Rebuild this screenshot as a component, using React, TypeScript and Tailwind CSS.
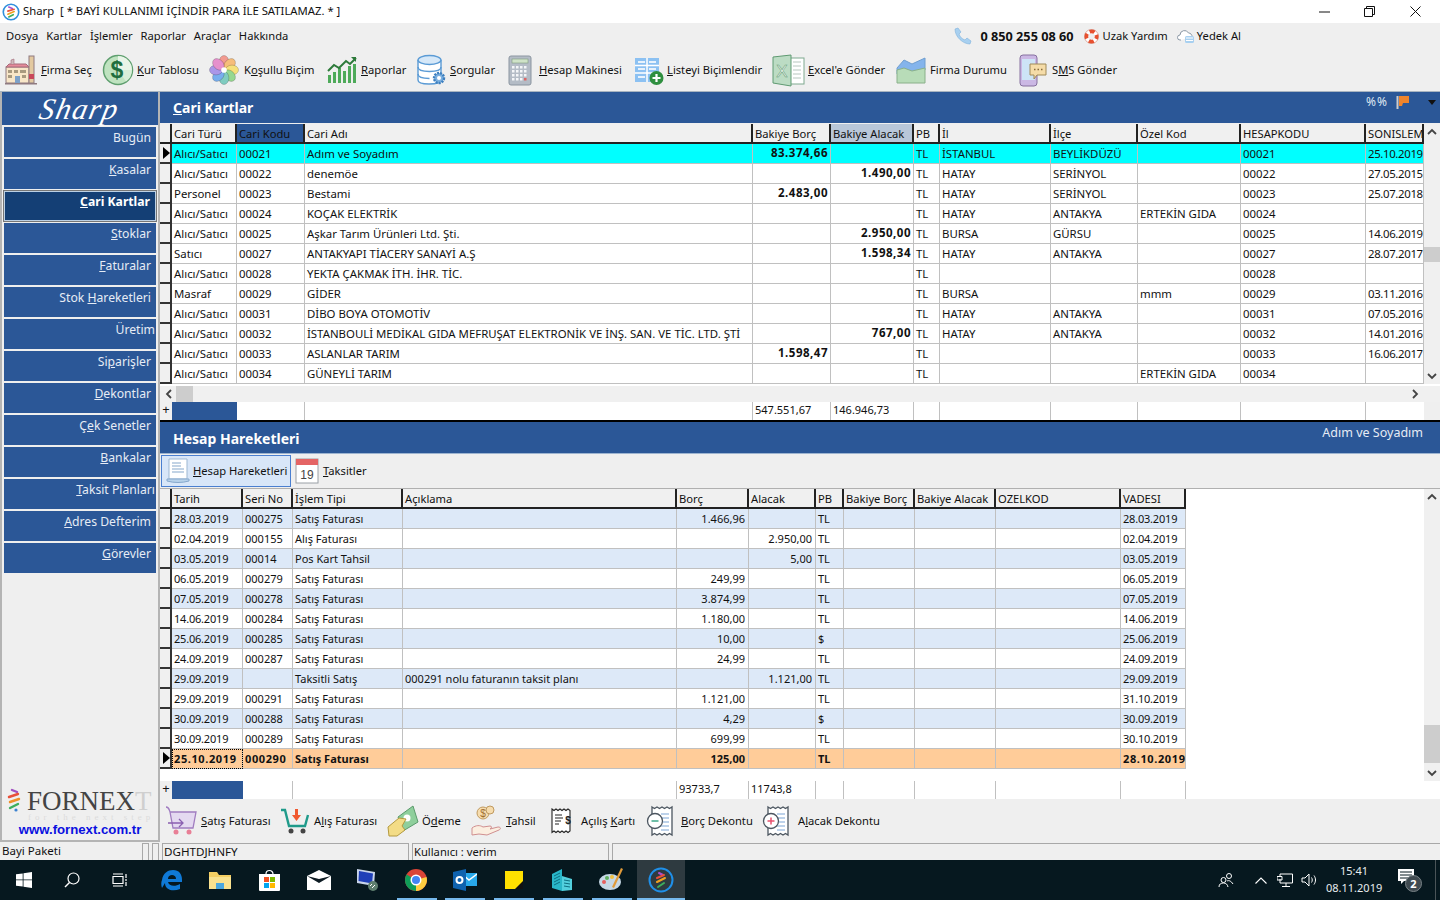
import React from "react";

const U = ({ t }: { t: string }) => {
  const i = t.indexOf("&");
  if (i < 0) return <>{t}</>;
  return (
    <>
      {t.slice(0, i)}
      <u>{t[i + 1]}</u>
      {t.slice(i + 2)}
    </>
  );
};

const Logo = ({ s = 18 }: { s?: number }) => (
  <svg width={s} height={s} viewBox="0 0 20 20">
    <circle cx="10" cy="10" r="8.600" fill="#fff" stroke="#2f8fdc" strokeWidth="1.800" />
    <path d="M7.500 4.500l4 1.500" stroke="#a84fd0" strokeWidth="1.800" strokeLinecap="round" />
    <path d="M6.500 9l7-2" stroke="#e8503a" strokeWidth="1.800" strokeLinecap="round" />
    <path d="M6.500 12.500l7-3" stroke="#f0a020" strokeWidth="1.800" strokeLinecap="round" />
    <path d="M7.500 15.500l5-2.500" stroke="#3dae5c" strokeWidth="1.800" strokeLinecap="round" />
  </svg>
);
const LogoDark = () => (
  <svg width="26" height="26" viewBox="0 0 26 26">
    <circle cx="13" cy="13" r="11.500" fill="none" stroke="#1f8fe8" strokeWidth="2" />
    <path d="M11 6l4 2" stroke="#a84fd0" strokeWidth="2" strokeLinecap="round" />
    <path d="M9 11l7-3" stroke="#e8503a" strokeWidth="2" strokeLinecap="round" />
    <path d="M9 15l8-4" stroke="#f0a020" strokeWidth="2" strokeLinecap="round" />
    <path d="M10 20l6-4" stroke="#3dae5c" strokeWidth="2" strokeLinecap="round" />
  </svg>
);

const Factory = () => (
  <svg width="32" height="30" viewBox="0 0 32 30">
    <rect x="1" y="12" width="23" height="16" fill="#f8e6c8" stroke="#8f7a80" />
    <path d="M1 12l3-3h17l3 3z" fill="#e58a9a" stroke="#a56a78" />
    <path d="M6 9V5l3-1v5" fill="#cbb" stroke="#a56a78" strokeWidth=".6" />
    <rect x="24" y="1" width="5" height="27" fill="#e3c9a0" stroke="#8f7a80" />
    <rect x="24" y="19" width="5" height="5" fill="#c9485a" />
    <rect x="3" y="15" width="4" height="3" fill="#a89a80" />
    <rect x="9" y="15" width="4" height="3" fill="#a89a80" />
    <rect x="15" y="15" width="6" height="3" fill="#a89a80" />
    <rect x="3" y="20" width="4" height="3" fill="#a89a80" />
    <rect x="10" y="21" width="5" height="7" fill="#7ca0c8" />
    <rect x="17" y="20" width="4" height="3" fill="#a89a80" />
    <rect x="0" y="28" width="32" height="1.500" fill="#8f7a80" />
  </svg>
);
const Dollar = () => (
  <svg width="32" height="32" viewBox="0 0 32 32">
    <circle cx="16" cy="16" r="14.500" fill="#bfe3c0" stroke="#5f9f6f" strokeWidth="1.500" />
    <path d="M16 16V2a14 14 0 0 1 14 14z" fill="#e9f5e8" />
    <path d="M16 16h14a14 14 0 0 1-6 11.500z" fill="#d8eed8" />
    <text x="15" y="24" fontSize="23" fontWeight="700" textAnchor="middle" fill="#1f6e3f" fontFamily="Liberation Sans">$</text>
  </svg>
);
const Flower = () => {
  const c = ["#f29a90", "#f6bd7a", "#f5e07a", "#96d890", "#80ccc0", "#78aeee", "#aa96e8", "#e690cc"];
  return (
    <svg width="32" height="32" viewBox="0 0 32 32">
      {c.map((f, i) => (
        <ellipse key={i} cx="16" cy="7.500" rx="5.200" ry="7" fill={f} stroke="#00000030" transform={`rotate(${i * 45} 16 16)`} />
      ))}
      <circle cx="16" cy="16" r="3" fill="#fff" />
    </svg>
  );
};
const Chart = () => (
  <svg width="30" height="28" viewBox="0 0 30 28">
    {[1, 6, 11, 16, 21, 26].map((x, i) => (
      <rect key={x} x={x} y={[19, 16, 12, 15, 10, 8][i]} width="3" height={[8, 11, 15, 12, 17, 19][i]} fill="#4eaa5a" />
    ))}
    <path d="M1 15l6-6 5 3 7-7 4 3 6-6" fill="none" stroke="#2d7a3a" strokeWidth="2" />
    <path d="M24 1h5v5z" fill="#2d7a3a" />
  </svg>
);
const Db = () => (
  <svg width="30" height="32" viewBox="0 0 30 32">
    <path d="M1 6v20c0 3 5 4 11 4s12-1 12-4V6" fill="#fff" stroke="#5b9bd5" strokeWidth="1.400" />
    <ellipse cx="12.500" cy="6" rx="11.500" ry="4.500" fill="#d6e8f8" stroke="#5b9bd5" strokeWidth="1.400" />
    <path d="M1 13c0 3 5 4.500 11.500 4.500S24 16 24 13M1 20c0 3 5 4.500 11.500 4.500" fill="none" stroke="#5b9bd5" strokeWidth="1.400" />
    <circle cx="22" cy="24" r="5" fill="#7cb0e0" stroke="#3d7fbf" strokeWidth="2.400" strokeDasharray="2 1" />
    <circle cx="22" cy="24" r="2" fill="#fff" />
  </svg>
);
const Calc = () => (
  <svg width="24" height="31" viewBox="0 0 24 31">
    <rect x="1" y="1" width="22" height="29" rx="2" fill="#b4bcc6" stroke="#8b95a0" />
    <rect x="4" y="4" width="16" height="4" fill="#cfe3c8" stroke="#7f9a7f" strokeWidth=".6" />
    {[11, 15, 19, 23].map((y) =>
      [4, 8, 12, 16].map((x) => <rect key={x + "" + y} x={x} y={y} width="2.500" height="2.500" fill={x === 16 && y === 23 ? "#d66" : "#f4f6f8"} />)
    )}
  </svg>
);
const ListAdd = () => (
  <svg width="30" height="30" viewBox="0 0 30 30">
    <rect x="0" y="3" width="24" height="24" fill="#8cc1f2" />
    <path d="M0 10.500h24M0 18h24M12 3v24" stroke="#fff" strokeWidth="1.500" />
    <path d="M3 6h7v2H3zM14 6h7v2h-7zM3 13h7v2H3zM14 13h7v2h-7zM3 21h7v2H3z" fill="#e8f2fc" />
    <circle cx="21.500" cy="23" r="7" fill="#2f8f3f" />
    <path d="M21.500 19v8M17.500 23h8" stroke="#fff" strokeWidth="2.200" />
  </svg>
);
const Excel = () => (
  <svg width="33" height="33" viewBox="0 0 33 33">
    <rect x="18" y="4" width="14" height="26" fill="#fff" stroke="#7fa98f" />
    <path d="M21 8h8M21 12h8M21 16h8M21 20h8M21 24h8" stroke="#b8c8c0" strokeWidth="1.200" />
    <path d="M1 3l18-2v31L1 29z" fill="#bcdcc4" stroke="#5f9a72" />
    <text x="10" y="23" fontSize="17" textAnchor="middle" fill="#fff" stroke="#5f9a72" strokeWidth=".5" fontFamily="Liberation Sans">X</text>
  </svg>
);
const Area = () => (
  <svg width="30" height="30" viewBox="0 0 30 30">
    <path d="M1 13l7-8 8 4 13-6v12l-13 3-8-2-7 3z" fill="#84b4ec" stroke="#6f9ed0" />
    <path d="M1 15l7-2 8 3 13-3v15H1z" fill="#b8dcb8" stroke="#8ab08a" />
  </svg>
);
const Sms = () => (
  <svg width="28" height="33" viewBox="0 0 28 33">
    <rect x="1" y="1" width="17" height="31" rx="3" fill="#cbb8e4" stroke="#86709f" />
    <rect x="3" y="5" width="13" height="21" fill="#cde4f6" />
    <path d="M11 10h16v11h-9l-3 4v-4h-4z" fill="#f5dca8" stroke="#a08a58" />
    <path d="M15 15.500h1.500M18.500 15.500H20M22 15.500h1.500" stroke="#86693a" strokeWidth="1.500" />
  </svg>
);

const Phone = () => (
  <svg width="18" height="18" viewBox="0 0 18 18">
    <path d="M1 2l3-1 3 4-2 2c1 3 3 5 6 6l2-2 4 3-1 3C9 17 1 10 1 2z" fill="#a8d0f0" stroke="#7fb2dc" strokeWidth=".6" />
  </svg>
);
const Buoy = () => (
  <svg width="15" height="15" viewBox="0 0 16 16">
    <circle cx="8" cy="8" r="5.500" fill="none" stroke="#fff" strokeWidth="4" />
    <circle cx="8" cy="8" r="5.500" fill="none" stroke="#e8502f" strokeWidth="4" strokeDasharray="5.400 3.240" strokeDashoffset="2.700" />
    <circle cx="8" cy="8" r="7.500" fill="none" stroke="#c8604a" strokeWidth=".5" />
  </svg>
);
const Cloud = () => (
  <svg width="18" height="16" viewBox="0 0 18 16">
    <path d="M4 12H3a2.500 2.500 0 0 1 0-5 4.500 4.500 0 0 1 8.500-2A3.500 3.500 0 0 1 15 9" fill="#fff" stroke="#8a97a5" />
    <rect x="8" y="8" width="9" height="7" rx="1.500" fill="#a8d0f0" />
    <path d="M9 10h7M9 12.500h7" stroke="#fff" />
  </svg>
);
const Doc = () => (
  <svg width="24" height="26" viewBox="0 0 24 26">
    <path d="M3 1h18v20H3z" fill="#fff" stroke="#9db7d2" />
    <path d="M6 5h9M6 8h9M6 11h12M6 14h12" stroke="#86a8cc" strokeWidth="1.200" />
    <path d="M1 21h22v2c-7 2-15 2-22 0z" fill="#b8d2ea" stroke="#86a8cc" />
  </svg>
);
const Cal = () => (
  <svg width="24" height="26" viewBox="0 0 24 26">
    <rect x="1" y="1" width="22" height="24" fill="#fff" stroke="#9aa0a6" />
    <rect x="1" y="1" width="22" height="6" fill="#e46464" />
    <text x="12" y="21" fontSize="12" textAnchor="middle" fill="#444" fontFamily="Liberation Sans">19</text>
  </svg>
);
const CartOut = () => (
  <svg width="32" height="30" viewBox="0 0 32 30">
    <path d="M1 1c3 0 3 2 4 5h26l-3 16H8L5 6" fill="#e4d9f0" stroke="#a07cc0" strokeWidth="1.300" />
    <path d="M3 17h15m-4-4 4 4-4 4" fill="none" stroke="#8a5fb0" strokeWidth="1.300" />
    <circle cx="11" cy="26" r="2.500" fill="#e87f96" />
    <circle cx="24" cy="26" r="2.500" fill="#e87f96" />
  </svg>
);
const CartIn = () => (
  <svg width="30" height="28" viewBox="0 0 30 28">
    <path d="M1 3h4l4 16h16l3-11" fill="none" stroke="#1f9a8a" strokeWidth="2.400" />
    <circle cx="11" cy="24" r="2.500" fill="#444" />
    <circle cx="23" cy="24" r="2.500" fill="#444" />
    <path d="M15 2h3v6h3l-4.500 6L12 8h3z" fill="#f0582f" />
  </svg>
);
const Pay = () => (
  <svg width="32" height="32" viewBox="0 0 32 32">
    <path d="M11 12 26 1l5 16-15 9z" fill="#8fcf9c" stroke="#5b9a6c" />
    <circle cx="20" cy="13" r="3.500" fill="#fff" />
    <path d="M1 22 12 13l7 1-4 7 3 4-8 6H2z" fill="#f3dc86" stroke="#b49a40" />
  </svg>
);
const Tahsil = () => (
  <svg width="32" height="32" viewBox="0 0 32 32">
    <circle cx="12" cy="8" r="6" fill="#f6dcae" stroke="#c09a60" />
    <circle cx="19" cy="5" r="4" fill="#f6dcae" stroke="#c09a60" />
    <text x="12" y="12" fontSize="10" textAnchor="middle" fill="#a06f30" fontFamily="Liberation Sans">$</text>
    <path d="M1 23c4-3 8-3 11-1l7-1c2 0 2 2 0 3l8-2c3 0 3 2 1 3l-12 5-8-1-7 1z" fill="#fbeee0" stroke="#d08f90" />
  </svg>
);
const Receipt = () => (
  <svg width="24" height="28" viewBox="0 0 24 28">
    <path d="M2 2l2 1.500 2-1.500 2 1.500 2-1.500 2 1.500 2-1.500 2 1.500 2-1.500 2 1.500V24l-2 1.500-2-1.500-2 1.500-2-1.500-2 1.500-2-1.500-2 1.500-2-1.500-2 1.500z" fill="#fff" stroke="#222" strokeWidth="1.100" />
    <path d="M5 8h7M5 11h8M5 14h6M5 17h4" stroke="#222" strokeWidth="1.200" />
    <text x="18" y="17" fontSize="10" fontWeight="700" textAnchor="middle" fill="#222" fontFamily="Liberation Sans">$</text>
  </svg>
);
const Dek = ({ plus }: { plus?: boolean }) => (
  <svg width="28" height="33" viewBox="0 0 28 33">
    <path d="M6 2l2.500 1.500L11 2l2.500 1.500L16 2l2.500 1.500L21 2l2.500 1.500L26 2v28l-2.500-1.500L21 30l-2.500-1.500L16 30l-2.500-1.500L11 30l-2.500-1.500L6 30z" fill="#fff" stroke="#4c5660" strokeWidth="1.300" />
    <path d="M15 9h8M15 13h8M17 17h6M15 21h8M15 25h8" stroke="#a8c4e4" strokeWidth="1.300" />
    <circle cx="9" cy="16" r="7.500" fill="#fff" stroke="#4c5660" strokeWidth="1.300" />
    {plus ? <path d="M9 12.500v7M5.500 16h7" stroke="#e8506e" strokeWidth="1.500" /> : <path d="M5.500 16h7" stroke="#3fa88a" strokeWidth="1.500" />}
  </svg>
);

const TOP_ITEMS: [string, React.ReactNode, string, string][] = [
  ["&Firma Seç", <Factory />, "ml-[5px] w-[32px]", "ml-[4px] w-[61px]"],
  ["&Kur Tablosu", <Dollar />, "w-[32px]", "ml-[3px] w-[72px]"],
  ["K&oşullu Biçim", <Flower />, "w-[30px]", "ml-[5px] w-[83px]"],
  ["&Raporlar", <Chart />, "w-[30px]", "ml-[4px] w-[56px]"],
  ["&Sorgular", <Db />, "w-[30px]", "ml-[3px] w-[58px]"],
  ["&Hesap Makinesi", <Calc />, "w-[24px]", "ml-[7px] w-[96px]"],
  ["&Listeyi Biçimlendir", <ListAdd />, "w-[30px]", "ml-[2px] w-[105px]"],
  ["&Excel'e Gönder", <Excel />, "w-[33px]", "ml-[3px] w-[88px]"],
  ["Firma Durumu", <Area />, "w-[30px]", "ml-[4px] w-[89px]"],
  ["S&MS Gönder", <Sms />, "w-[28px]", "ml-[5px] w-[80px]"],
];

const SIDE = [
  ["Bugün", ""],
  ["&Kasalar", ""],
  ["&Cari Kartlar", "sel"],
  ["&Stoklar", ""],
  ["&Faturalar", ""],
  ["Stok &Hareketleri", ""],
  ["Üretim", "wide"],
  ["Si&parişler", ""],
  ["&Dekontlar", ""],
  ["Ç&ek Senetler", ""],
  ["&Bankalar", ""],
  ["&Taksit Planları", "wide"],
  ["&Adres Defterim", ""],
  ["&Görevler", ""],
];

const TOP_HEAD = ["Cari Türü", "Cari Kodu", "Cari Adı", "Bakiye Borç", "Bakiye Alacak", "PB", "İl", "İlçe", "Özel Kod", "HESAPKODU", "SONISLEM"];
const TOP_ROWS = [
  ["Alıcı/Satıcı", "00021", "Adım ve Soyadım", "83.374,66", "", "TL", "İSTANBUL", "BEYLİKDÜZÜ", "", "00021", "25.10.2019"],
  ["Alıcı/Satıcı", "00022", "denemöe", "", "1.490,00", "TL", "HATAY", "SERİNYOL", "", "00022", "27.05.2015"],
  ["Personel", "00023", "Bestami", "2.483,00", "", "TL", "HATAY", "SERİNYOL", "", "00023", "25.07.2018"],
  ["Alıcı/Satıcı", "00024", "KOÇAK ELEKTRİK", "", "", "TL", "HATAY", "ANTAKYA", "ERTEKİN GIDA", "00024", ""],
  ["Alıcı/Satıcı", "00025", "Aşkar Tarım Ürünleri Ltd. Şti.", "", "2.950,00", "TL", "BURSA", "GÜRSU", "", "00025", "14.06.2019"],
  ["Satıcı", "00027", "ANTAKYAPI TİACERY SANAYİ A.Ş", "", "1.598,34", "TL", "HATAY", "ANTAKYA", "", "00027", "28.07.2017"],
  ["Alıcı/Satıcı", "00028", "YEKTA ÇAKMAK İTH. İHR. TİC.", "", "", "TL", "", "", "", "00028", ""],
  ["Masraf", "00029", "GİDER", "", "", "TL", "BURSA", "", "mmm", "00029", "03.11.2016"],
  ["Alıcı/Satıcı", "00031", "DİBO BOYA OTOMOTİV", "", "", "TL", "HATAY", "ANTAKYA", "", "00031", "07.05.2016"],
  ["Alıcı/Satıcı", "00032", "İSTANBOULİ MEDİKAL GIDA MEFRUŞAT ELEKTRONİK VE İNŞ. SAN. VE TİC. LTD. ŞTİ", "", "767,00", "TL", "HATAY", "ANTAKYA", "", "00032", "14.01.2016"],
  ["Alıcı/Satıcı", "00033", "ASLANLAR TARIM", "1.598,47", "", "TL", "", "", "", "00033", "16.06.2017"],
  ["Alıcı/Satıcı", "00034", "GÜNEYLİ TARIM", "", "", "TL", "", "", "ERTEKİN GIDA", "00034", ""],
];
const TOP_COLS = "grid grid-cols-[12px_65px_68px_448px_78px_83px_26px_111px_87px_103px_125px_58px]";

const LOW_HEAD = ["Tarih", "Seri No", "İşlem Tipi", "Açıklama", "Borç", "Alacak", "PB", "Bakiye Borç", "Bakiye Alacak", "OZELKOD", "VADESI"];
const LOW_ROWS = [
  ["28.03.2019", "000275", "Satış Faturası", "", "1.466,96", "", "TL", "28.03.2019"],
  ["02.04.2019", "000155", "Alış Faturası", "", "", "2.950,00", "TL", "02.04.2019"],
  ["03.05.2019", "00014", "Pos Kart Tahsil", "", "", "5,00", "TL", "03.05.2019"],
  ["06.05.2019", "000279", "Satış Faturası", "", "249,99", "", "TL", "06.05.2019"],
  ["07.05.2019", "000278", "Satış Faturası", "", "3.874,99", "", "TL", "07.05.2019"],
  ["14.06.2019", "000284", "Satış Faturası", "", "1.180,00", "", "TL", "14.06.2019"],
  ["25.06.2019", "000285", "Satış Faturası", "", "10,00", "", "$", "25.06.2019"],
  ["24.09.2019", "000287", "Satış Faturası", "", "24,99", "", "TL", "24.09.2019"],
  ["29.09.2019", "", "Taksitli Satış", "000291 nolu faturanın taksit planı", "", "1.121,00", "TL", "29.09.2019"],
  ["29.09.2019", "000291", "Satış Faturası", "", "1.121,00", "", "TL", "31.10.2019"],
  ["30.09.2019", "000288", "Satış Faturası", "", "4,29", "", "$", "30.09.2019"],
  ["30.09.2019", "000289", "Satış Faturası", "", "699,99", "", "TL", "30.10.2019"],
  ["25.10.2019", "000290", "Satış Faturası", "", "125,00", "", "TL", "28.10.2019"],
];
const LOW_COLS = "grid grid-cols-[12px_71px_50px_110px_274px_72px_67px_28px_71px_81px_125px_65px]";

const BOTTOM: [string, React.ReactNode, string, string][] = [
  ["&Satış Faturası", <CartOut />, "ml-[5px] w-[32px]", "ml-[4px] w-[79px]"],
  ["A&lış Faturası", <CartIn />, "w-[30px]", "ml-[4px] w-[73px]"],
  ["Ö&deme", <Pay />, "w-[32px]", "ml-[3px] w-[49px]"],
  ["&Tahsil", <Tahsil />, "w-[32px]", "ml-[3px] w-[44px]"],
  ["Açılış &Kartı", <Receipt />, "w-[24px]", "ml-[7px] w-[65px]"],
  ["&Borç Dekontu", <Dek />, "w-[28px]", "ml-[7px] w-[81px]"],
  ["A&lacak Dekontu", <Dek plus />, "w-[28px]", "ml-[8px] w-[90px]"],
];

const ScrollArrow = ({ dir }: { dir: string }) => (
  <svg width="10" height="8" viewBox="0 0 10 8" className={dir === "up" ? "" : dir === "down" ? "rotate-180" : dir === "left" ? "-rotate-90" : "rotate-90"}>
    <path d="M1 6l4-4 4 4" fill="none" stroke="#444" strokeWidth="1.800" />
  </svg>
);

const TopGrid = () => (
  <div className="flex h-[260px]">
    <div className="w-[1264px] shrink-0">
      <div className={`${TOP_COLS} h-[20px] bg-[#f0f0f0]`}>
        <div className="border-r-2 border-b-2 border-r-[#222] border-b-[#222]" />
        {TOP_HEAD.map((h, i) => (
          <div
            key={h}
            className={`border-r-2 border-b-2 border-[#222] pl-[2px] leading-[19px] whitespace-nowrap overflow-hidden ${i === 1 ? "bg-[#2b5797] text-[#111]" : i === 4 ? "bg-[#b9c7d9]" : ""}`}
          >
            {h}
          </div>
        ))}
      </div>
      {TOP_ROWS.map((r, ri) => (
        <div key={ri} className={`${TOP_COLS} h-[20px] text-[11.400px] ${ri === 0 ? "bg-[#00ffff]" : "bg-white"}`}>
          <div className="bg-[#f0f0f0] border-r-2 border-b-2 border-[#333] flex items-center">
            {ri === 0 && <div className="ml-[3px] w-0 h-0 border-y-[6px] border-y-transparent border-l-[7px] border-l-black" />}
          </div>
          {r.map((c, ci) => (
            <div
              key={ci}
              className={`border-r border-b border-[#c0c0c0] whitespace-nowrap overflow-hidden ${ci === 3 || ci === 4 ? "text-right pr-[2px] font-bold text-[11.500px] tracking-[0.5px] leading-[17px]" : "pl-[2px] leading-[19px]"} ${ci === 10 ? "tracking-[-0.35px]" : ""}`}
            >
              {c}
            </div>
          ))}
        </div>
      ))}
    </div>
    <div className="w-[16px] bg-[#f0f0f0] flex flex-col items-center justify-between py-[4px] relative">
      <ScrollArrow dir="up" />
      <div className="absolute left-0 top-[123px] w-[16px] h-[15px] bg-[#cdcdcd]" />
      <ScrollArrow dir="down" />
    </div>
  </div>
);

const App = () => (
  <div className="w-[1440px] h-[900px] flex flex-col overflow-hidden bg-[#efefef] text-[11.200px] text-[#111] font-['Noto_Sans','Open_Sans',sans-serif]">
    {/* title bar */}
    <div className="h-[23px] bg-white flex items-center shrink-0">
      <div className="ml-[2px] w-[18px] h-[18px]"><Logo /></div>
      <div className="ml-[3px] text-[11.300px] whitespace-nowrap">Sharp&nbsp; [ * BAYİ KULLANIMI İÇİNDİR PARA İLE SATILAMAZ. * ]</div>
      <div className="ml-auto flex items-center">
        <svg width="11" height="2" viewBox="0 0 11 2" className="mr-[34px]"><path d="M0 1h11" stroke="#111" /></svg>
        <svg width="11" height="11" viewBox="0 0 11 11" className="mr-[35px]"><path d="M.5 2.500h8v8h-8zM2.500 2.500v-2h8v8h-2" fill="none" stroke="#111" /></svg>
        <svg width="11" height="11" viewBox="0 0 11 11" className="mr-[19px]"><path d="M.5.5l10 10M10.500.5l-10 10" stroke="#111" /></svg>
      </div>
    </div>
    {/* menu */}
    <div className="h-[26px] flex items-center shrink-0 pl-[6px] pr-[199px] pt-[1px]">
      <div className="flex gap-[8px]">
        {["Dosya", "Kartlar", "İşlemler", "Raporlar", "Araçlar", "Hakkında"].map((m) => (
          <span key={m}>{m}</span>
        ))}
      </div>
      <div className="ml-auto flex items-center">
        <Phone />
        <span className="ml-[8px] text-[12.700px] font-bold">0 850 255 08 60</span>
        <span className="ml-[10px]"><Buoy /></span>
        <span className="ml-[4px]">Uzak Yardım</span>
        <span className="ml-[9px]"><Cloud /></span>
        <span className="ml-[2px]">Yedek Al</span>
      </div>
    </div>
    {/* toolbar */}
    <div className="h-[43px] flex items-center shrink-0 border-b border-[#a8b4c0]">
      {TOP_ITEMS.map(([t, ic, a, b]) => (
        <div key={t} className="flex items-center">
          <div className={`${a} flex justify-center`}>{ic}</div>
          <div className={`${b} whitespace-nowrap pt-[1px]`}><U t={t} /></div>
        </div>
      ))}
    </div>
    {/* middle */}
    <div className="flex-1 flex min-h-0">
      <div className="w-[160px] shrink-0 flex flex-col border-l-2 border-r-2 border-b-2 border-[#b4b4b4] mb-[1px]">
        <div className="h-[33px] bg-[#2b5797] flex items-center justify-center text-white shrink-0">
          <span className="italic text-[30px] leading-none tracking-[1.500px] -skew-x-12 font-['Liberation_Serif',serif]">Sharp</span>
        </div>
        <div className="flex flex-col gap-[2px] px-[2px] pt-[2px]">
          {SIDE.map(([t, k]) =>
            k === "sel" ? (
              <div key={t} className="h-[32px] -my-[1px] -mx-[1px] border border-[#777]">
                <div className="h-full border border-[#bcd0e4] bg-[#143f75] text-right text-[12.200px] leading-[20px] pr-[5px] font-bold text-white whitespace-nowrap">
                  <U t={t} />
                </div>
              </div>
            ) : (
              <div
                key={t}
                className={`h-[30px] text-right text-[12.200px] leading-[21px] whitespace-nowrap bg-[#2b5797] text-[#e6ecf5] ${k === "wide" ? "pr-[1px]" : "pr-[5px]"}`}
              >
                <U t={t} />
              </div>
            )
          )}
        </div>
        <div className="mt-auto">
          <div className="flex items-center pl-[5px]">
            <svg width="14" height="26" viewBox="0 0 14 26" className="shrink-0">
              <path d="M5 2l5 2" stroke="#a050c0" strokeWidth="2.400" strokeLinecap="round" />
              <path d="M2 9l9-3" stroke="#e8503a" strokeWidth="2.400" strokeLinecap="round" />
              <path d="M3 14l9-3" stroke="#f0902a" strokeWidth="2.400" strokeLinecap="round" />
              <path d="M3 20l8-4" stroke="#3dae5c" strokeWidth="2.400" strokeLinecap="round" />
              <circle cx="9" cy="22" r="1.600" fill="#3b82d0" />
            </svg>
            <div className="ml-[6px] text-[27px] leading-[22px] text-[#444] font-['Liberation_Serif',serif] whitespace-nowrap">
              FORNEX<span className="text-[#cfcfcf]">T</span>
            </div>
          </div>
          <div className="text-[9px] leading-[6px] tracking-[4px] text-[#dcdcdc] pl-[26px] font-['Liberation_Serif',serif] whitespace-nowrap">
            for the next step
          </div>
          <div className="text-center text-[13.200px] leading-[20px] font-bold text-[#0a10e0] font-['Liberation_Sans',sans-serif]">www.fornext.com.tr</div>
        </div>
      </div>
      <div className="flex-1 min-w-0 flex flex-col">
        <div className="h-[31px] bg-[#2b5797] flex text-white shrink-0 mb-[1px]">
          <div className="ml-[13px] text-[14px] font-bold leading-[31px]"><U t="&Cari Kartlar" /></div>
          <div className="ml-auto flex items-start pt-[3px]">
            <span className="text-[12px] tracking-[1px] text-[#dfe7f2] leading-[14px]">%%</span>
            <svg width="14" height="15" viewBox="0 0 14 15" className="ml-[8px]"><path d="M1.500 1v13" stroke="#ccc" strokeWidth="2" /><path d="M3 1h10v7H7l-1 3H3z" fill="#f0842a" /></svg>
            <svg width="10" height="5" viewBox="0 0 10 5" className="ml-[17px] mr-[3px] mt-[5px]"><path d="M1 0h8L5 5z" fill="#111" /></svg>
          </div>
        </div>
        <TopGrid />
        <div className="h-[2px] shrink-0 bg-white" />
        <div className="h-[16px] shrink-0 flex items-center bg-[#f0f0f0] pl-[4px] pr-[20px]">
          <ScrollArrow dir="left" />
          <div className="ml-[2px] w-[17px] h-[16px] bg-[#cdcdcd]" />
          <div className="ml-auto"><ScrollArrow dir="right" /></div>
        </div>
        <div className={`${TOP_COLS} h-[18px] shrink-0 bg-white w-[1264px]`}>
          <div className="bg-[#f0f0f0] leading-[15px] text-[13px] text-center">+</div>
          <div className="bg-[#2b5797]" />
          <div className="border-r border-[#c0c0c0]" />
          <div className="border-r border-[#c0c0c0]" />
          <div className="border-r border-[#c0c0c0] pl-[2px] leading-[15px] text-[11px]">547.551,67</div>
          <div className="border-r border-[#c0c0c0] pl-[2px] leading-[15px] text-[11px]">146.946,73</div>
          <div className="border-r border-[#c0c0c0]" />
          <div className="border-r border-[#c0c0c0]" />
          <div className="border-r border-[#c0c0c0]" />
          <div className="border-r border-[#c0c0c0]" />
          <div className="border-r border-[#c0c0c0]" />
          <div />
        </div>
        <div className="h-[2px] bg-black shrink-0" />
        <div className="h-[32px] bg-[#2b5797] border-b border-[#9db4d0] flex text-white shrink-0">
          <div className="ml-[13px] text-[14px] font-bold leading-[33px]">Hesap Hareketleri</div>
          <div className="ml-auto mr-[17px] text-[12.500px] leading-[22px] text-[#e6ecf5]">Adım ve Soyadım</div>
        </div>
        <div className="h-[34px] flex items-center shrink-0 pl-[1px]">
          <div className="h-[32px] w-[130px] flex items-center bg-[#d8e6f8] border border-[#4a7fd0] pl-[4px] shrink-0">
            <Doc />
            <span className="ml-[3px] pt-[1px] whitespace-nowrap"><U t="&Hesap Hareketleri" /></span>
          </div>
          <div className="ml-[4px]"><Cal /></div>
          <span className="ml-[4px] pt-[1px]"><U t="&Taksitler" /></span>
        </div>
        <div className="flex-1 min-h-0 flex flex-col bg-white border-t border-[#b0b0b0]">
          <div className="flex h-[292px] shrink-0">
            <div className="w-[1264px] shrink-0">
              <div className={`${LOW_COLS} h-[20px] w-[1026px]`}>
                <div className="bg-[#f0f0f0] border-r-2 border-b-2 border-[#222]" />
                {LOW_HEAD.map((h) => (
                  <div key={h} className="bg-[#f0f0f0] border-r-2 border-b-2 border-[#222] pl-[2px] leading-[19px] whitespace-nowrap overflow-hidden">{h}</div>
                ))}
              </div>
              {LOW_ROWS.map((r, ri) => {
                const last = ri === LOW_ROWS.length - 1;
                const cells = [r[0], r[1], r[2], r[3], r[4], r[5], r[6], "", "", "", r[7]];
                return (
                  <div key={ri} className={`${LOW_COLS} h-[20px] w-[1026px] text-[11px] ${last ? "bg-[#ffcc99] font-bold" : ri % 2 === 0 ? "bg-[#dde9f8]" : "bg-white"}`}>
                    <div className="bg-[#f0f0f0] border-r-2 border-b-2 border-[#333] flex items-center font-normal">
                      {last && <div className="ml-[3px] w-0 h-0 border-y-[6px] border-y-transparent border-l-[7px] border-l-black" />}
                    </div>
                    {cells.map((c, ci) => (
                      <div
                        key={ci}
                        className={`border-r border-b border-[#c0c0c0] leading-[19px] whitespace-nowrap overflow-hidden ${ci === 4 || ci === 5 ? "text-right pr-[3px]" : "pl-[2px]"} ${last && ci === 0 ? "outline-1 outline-dotted outline-offset-[-1px] outline-black" : ""} ${(ci === 0 || ci === 10) ? (last ? "tracking-[0.6px]" : "tracking-[-0.2px]") : ""} ${last && ci === 1 ? "tracking-[0.6px]" : ""}`}
                      >
                        {c}
                      </div>
                    ))}
                  </div>
                );
              })}
            </div>
            <div className="w-[16px] bg-[#f0f0f0] flex flex-col items-center pt-[4px] pb-[4px]">
              <ScrollArrow dir="up" />
              <div className="mt-auto w-[16px] h-[38px] bg-[#cdcdcd] mb-[6px]" />
              <ScrollArrow dir="down" />
            </div>
          </div>
          <div className={`${LOW_COLS} h-[18px] w-[1026px] shrink-0`}>
            <div className="bg-[#efefef] leading-[15px] text-[13px] text-center">+</div>
            <div className="bg-[#2b5797]" />
            <div className="border-r border-[#c0c0c0]" />
            <div className="border-r border-[#c0c0c0]" />
            <div className="border-r border-[#c0c0c0]" />
            <div className="border-r border-[#c0c0c0] pl-[2px] leading-[15px] text-[11px]">93733,7</div>
            <div className="border-r border-[#c0c0c0] pl-[2px] leading-[15px] text-[11px]">11743,8</div>
            <div className="border-r border-[#c0c0c0]" />
            <div className="border-r border-[#c0c0c0]" />
            <div className="border-r border-[#c0c0c0]" />
            <div className="border-r border-[#c0c0c0]" />
            <div className="border-r border-[#c0c0c0]" />
          </div>
          <div className="flex-1 bg-[#efefef] flex items-center">
            {BOTTOM.map(([t, ic, a, b]) => (
              <div key={t} className="flex items-center">
                <div className={`${a} flex justify-center`}>{ic}</div>
                <div className={`${b} whitespace-nowrap`}><U t={t} /></div>
              </div>
            ))}
          </div>
        </div>
      </div>
    </div>
    {/* status bar */}
    <div className="h-[17px] shrink-0 flex leading-[16px] pl-[2px]">
      <div className="w-[140px] text-[11.500px]">Bayi Paketi</div>
      <div className="w-[7px] border-t border-l border-r border-[#a8a8a8]" />
      <div className="ml-[3px] w-[7px] border-t border-l border-r border-[#a8a8a8]" />
      <div className="ml-[3px] w-[247px] border-t border-l border-r border-[#a8a8a8] pl-[1px] text-[11.600px]">DGHTDJHNFY</div>
      <div className="ml-[3px] w-[197px] border-t border-l border-r border-[#a8a8a8] pl-[1px]">Kullanıcı : verim</div>
      <div className="ml-[3px] flex-1 border-t border-l border-[#a8a8a8]" />
    </div>
    {/* taskbar */}
    <div className="h-[40px] shrink-0 bg-[#06181f] flex items-stretch text-white">
      <div className="w-[48px] flex items-center justify-center">
        <svg width="16" height="16" viewBox="0 0 16 16"><path d="M0 2.300 6.700 1.400V7.500H0zM7.500 1.300 16 0V7.500H7.500zM0 8.300h6.700v6.300L0 13.700zM7.500 8.300H16V16l-8.500-1.200z" fill="#fff" /></svg>
      </div>
      <div className="w-[48px] flex items-center justify-center">
        <svg width="16" height="16" viewBox="0 0 16 16"><circle cx="9.500" cy="6.500" r="5.500" fill="none" stroke="#fff" strokeWidth="1.200" /><path d="M5.500 10.500 1 15" stroke="#fff" strokeWidth="1.400" /></svg>
      </div>
      <div className="w-[48px] flex items-center justify-center">
        <svg width="16" height="16" viewBox="0 0 16 16"><path d="M1 4.500h10v7H1zM1 2h10M1 14h10M14 2v4M14 7v2M14 10v4" fill="none" stroke="#fff" strokeWidth="1.200" /></svg>
      </div>
      <div className="w-[4px]" />
      <div className="w-[48px] flex items-center justify-center">
        <svg width="22" height="22" viewBox="0 0 22 22"><path d="M1 11C2 4 7 1 12 1c6 0 9 4 9 10v2H7c.5 4 7 5 12 2v5c-7 3-15 1-15-6-1 2-2 3-3 5-1-3-1-6 0-8zm6-1h8c0-3-2-4-4-4s-4 1-4 4z" fill="#0f79d6" /></svg>
      </div>
      <div className="w-[48px] flex items-center justify-center">
        <svg width="22" height="19" viewBox="0 0 22 19"><path d="M0 1h8l2 3h12v14H0z" fill="#f4cf63" /><path d="M0 6h22v12H0z" fill="#f9e28f" /><path d="M7 12h8v6H7z" fill="#4aa8e0" /></svg>
      </div>
      <div className="w-[50px] flex items-center justify-center">
        <svg width="23" height="23" viewBox="0 0 23 23"><path d="M8 5a3.500 3.500 0 0 1 7 0" fill="none" stroke="#fff" strokeWidth="1.200" /><path d="M1 5h21v16a1 1 0 0 1-1 1H2a1 1 0 0 1-1-1z" fill="#fff" /><rect x="6" y="8" width="5" height="5" fill="#f25022" /><rect x="12" y="8" width="5" height="5" fill="#7fba00" /><rect x="6" y="14" width="5" height="5" fill="#00a4ef" /><rect x="12" y="14" width="5" height="5" fill="#ffb900" /></svg>
      </div>
      <div className="w-[50px] flex items-center justify-center">
        <svg width="24" height="20" viewBox="0 0 24 20"><path d="M0 6 12 0l12 6v14H0z" fill="#fff" /><path d="M0 6l12 7 12-7-12 3z" fill="#0c1a22" /></svg>
      </div>
      <div className="w-[49px] flex items-center justify-center pr-[3px]">
        <svg width="24" height="24" viewBox="0 0 24 24"><path d="M2 1l18 3-1 14-17-3z" fill="#c8d4ea" /><path d="M4 3l14 2.500-1 10L3.500 13z" fill="#1f3fb8" /><circle cx="18" cy="18" r="5" fill="#5f7f6f" /><path d="M15 18l2-2M17 20l3-3" stroke="#fff" /></svg>
      </div>
      <div className="w-[49px] flex relative items-center justify-center pr-[3px]">
        <svg width="24" height="24" viewBox="0 0 24 24"><circle cx="12" cy="12" r="11" fill="#db4437" /><path d="M12 12 22.500 9A11 11 0 0 1 12 23z" fill="#ffcd40" /><path d="M12 12 12 23A11 11 0 0 1 2.500 6.500z" fill="#0f9d58" /><circle cx="12" cy="12" r="5.500" fill="#fff" /><circle cx="12" cy="12" r="4" fill="#4285f4" /></svg>
        <div className="absolute bottom-0 left-[4px] right-[5px] h-[2px] bg-[#76b9ed]" />
      </div>
      <div className="w-[49px] flex relative items-center justify-center pr-[3px]">
        <svg width="24" height="22" viewBox="0 0 24 22"><rect x="9" y="4" width="15" height="13" fill="#28a8ea" /><path d="M9 5l7 6 8-6" fill="none" stroke="#fff" strokeWidth="1.500" /><path d="M0 3 13 0v22L0 19z" fill="#0f62ae" /><circle cx="6.500" cy="11" r="3" fill="none" stroke="#fff" strokeWidth="2" /></svg>
        <div className="absolute bottom-0 left-[3px] right-[6px] h-[2px] bg-[#76b9ed]" />
      </div>
      <div className="w-[49px] flex relative items-center justify-center pr-[3px]">
        <svg width="18" height="18" viewBox="0 0 18 18"><path d="M0 0h18v18H0z" fill="#ffe000" /><path d="M18 10v8h-8z" fill="#111" /></svg>
        <div className="absolute bottom-0 left-[3px] right-[6px] h-[2px] bg-[#76b9ed]" />
      </div>
      <div className="w-[49px] flex relative items-center justify-center pr-[3px]">
        <svg width="24" height="24" viewBox="0 0 24 24"><path d="M1 6l10-5v22L1 20z" fill="#29b6c8" /><path d="M11 8l10 3v11l-10 1z" fill="#53d0de" /><path d="M3 8l6-3M3 11l6-3M3 14l6-3M3 17l6-3M13 12l6 1M13 15l6 1M13 18l6 1" stroke="#0d6e80" /></svg>
        <div className="absolute bottom-0 left-[3px] right-[6px] h-[2px] bg-[#76b9ed]" />
      </div>
      <div className="w-[48px] flex relative items-center justify-center pr-[3px]">
        <svg width="26" height="24" viewBox="0 0 26 24"><ellipse cx="11" cy="14" rx="11" ry="8" fill="#c6d8e6" /><circle cx="5" cy="14" r="2" fill="#e86060" /><circle cx="8" cy="10" r="2" fill="#60b060" /><circle cx="13" cy="9" r="2" fill="#f0c040" /><path d="M24 1 15 20l-2-1L22 0z" fill="#e09a3a" /></svg>
        <div className="absolute bottom-0 left-[3px] right-[5px] h-[2px] bg-[#76b9ed]" />
      </div>
      <div className="w-[48px] relative flex items-center justify-center bg-[#2e3a40]">
        <LogoDark />
        <div className="absolute bottom-0 left-0 right-0 h-[2px] bg-[#76b9ed]" />
      </div>
      <div className="ml-auto flex items-center">
        <svg width="16" height="16" viewBox="0 0 16 16" className="mr-[21px]"><circle cx="11" cy="4" r="2.500" fill="none" stroke="#fff" /><circle cx="5.500" cy="8" r="2.500" fill="none" stroke="#fff" /><path d="M1 15c0-3 2-4 4.500-4s4 1.500 4.500 4M9 9c2-1 4 0 6 3" fill="none" stroke="#fff" /></svg>
        <svg width="12" height="7" viewBox="0 0 12 7" className="mr-[10px]"><path d="M.5 6.500 6 1l5.500 5.500" fill="none" stroke="#fff" strokeWidth="1.100" /></svg>
        <svg width="16" height="14" viewBox="0 0 16 14" className="mr-[8px]"><path d="M3 3.500V1h12.500v9H3V6M0 3.500h5V7H0zM9 10v3M5 13.500h8" fill="none" stroke="#fff" /></svg>
        <svg width="16" height="14" viewBox="0 0 16 14" className="mr-[9px]"><path d="M1 5h3l4-4v12L4 9H1zM10.500 4.500c1 1.500 1 3.500 0 5M13 2.500c2 3 2 6 0 9" fill="none" stroke="#fff" /></svg>
        <div className="w-[56px] text-center text-[11px] leading-[17px] text-[#e8ecee] pb-[2px]">
          <div>15:41</div>
          <div>08.11.2019</div>
        </div>
        <div className="relative w-[26px] h-[24px] ml-[15px] mr-[12px]">
          <svg width="16" height="16" viewBox="0 0 16 16" className="absolute left-[1px] top-[1px]"><path d="M0 0h16v12H6l-3 3v-3H0z" fill="#fff" /><path d="M2 3h12M2 6h12M2 9h9" stroke="#06181f" /></svg>
          <div className="absolute left-[8px] top-[7px] w-[17px] h-[17px] rounded-full bg-[#3f4a50] border border-[#7a8488] text-[11px] font-bold leading-[15px] text-center">2</div>
        </div>
        <div className="w-[1px] h-full bg-[#4a5458] mr-[4px]" />
      </div>
    </div>
  </div>
);

export default App;
